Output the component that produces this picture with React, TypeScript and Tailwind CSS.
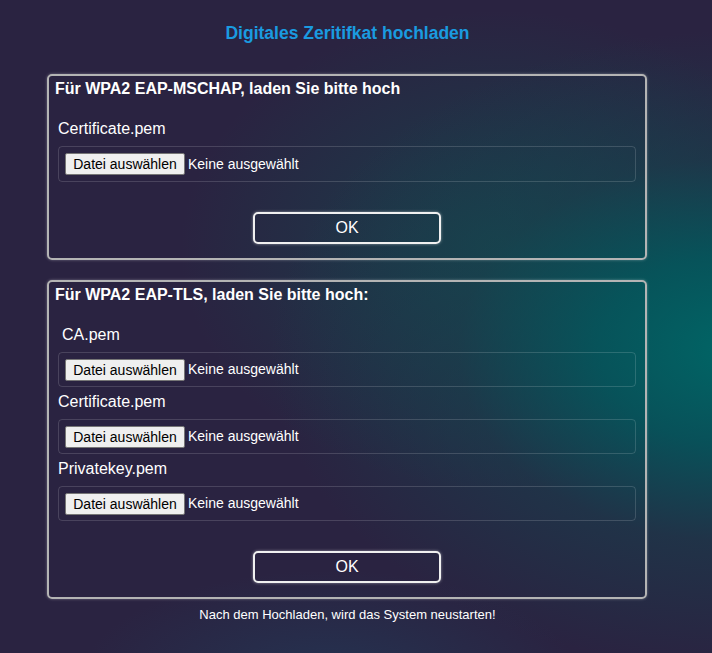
import React from 'react';

type FileRowProps = { label: string; indent?: boolean; tall?: boolean };

function FileRow({ label, indent, tall }: FileRowProps) {
  return (
    <div className="flex flex-col">
      <label className={`text-[16px] leading-[18px] text-white ${indent ? 'pl-[13px]' : 'pl-[9px]'}`}>{label}</label>
      <div className={`mt-[8px] mx-[9px] ${tall ? 'h-[36px]' : 'h-[35px]'} flex items-center px-[6px] rounded-[4px] border border-white/15`}>
        <button className="h-[22px] w-[120px] bg-[#efefef] border border-[#767676] rounded-[2px] text-[14px] text-black leading-none">
          Datei auswählen
        </button>
        <span className="ml-[3px] text-[14px] text-white">Keine ausgewählt</span>
      </div>
    </div>
  );
}

function OkButton() {
  return (
    <div className="flex justify-center mt-[30px]">
      <button className="w-[188px] h-[32px] rounded-[5px] border-2 border-[#f0f0f0] text-white text-[16px] shadow-[0_0_3px_rgba(255,255,255,0.5)]">
        OK
      </button>
    </div>
  );
}

function App() {
  return (
    <div
      className="w-[712px] h-[653px] overflow-hidden bg-[#2a2341] bg-[radial-gradient(ellipse_470px_320px_at_740px_350px,rgba(0,102,102,1)_0%,rgba(0,92,95,0.8)_30%,rgba(20,70,80,0.45)_60%,rgba(42,35,65,0)_100%),radial-gradient(ellipse_320px_240px_at_500px_250px,rgba(10,90,85,0.5),rgba(42,35,65,0)),radial-gradient(ellipse_250px_110px_at_330px_680px,rgba(30,70,100,0.45),rgba(42,35,65,0))]"
      style={{ fontFamily: '"Liberation Sans", Arial, sans-serif' }}
    >
      <div className="w-[695px] flex flex-col items-center pt-[24px]">
        <h1 className="text-[17.5px] leading-[18px] font-bold text-[#1a9be0]">Digitales Zeritifkat hochladen</h1>

        <div className="mt-[32px] w-[600px] ml-[-1px] rounded-[5px] border-2 border-[#b4b4b4] shadow-[0_0_3px_rgba(255,255,255,0.35)] pt-[4px] pb-[14px]">
          <h2 className="pl-[6px] text-[16px] leading-[18px] font-bold text-white">Für WPA2 EAP-MSCHAP, laden Sie bitte hoch</h2>
          <div className="mt-[22px]">
            <FileRow label="Certificate.pem" tall />
          </div>
          <OkButton />
        </div>

        <div className="mt-[20px] w-[600px] ml-[-1px] rounded-[5px] border-2 border-[#b4b4b4] shadow-[0_0_3px_rgba(255,255,255,0.35)] pt-[4px] pb-[14px]">
          <h2 className="pl-[6px] text-[16px] leading-[18px] font-bold text-white">Für WPA2 EAP-TLS, laden Sie bitte hoch:</h2>
          <div className="mt-[22px] flex flex-col gap-[6px]">
            <FileRow label="CA.pem" indent />
            <FileRow label="Certificate.pem" />
            <FileRow label="Privatekey.pem" />
          </div>
          <OkButton />
        </div>

        <p className="mt-[9px] text-[13px] leading-[14px] text-white">Nach dem Hochladen, wird das System neustarten!</p>
      </div>
    </div>
  );
}

export default App;
